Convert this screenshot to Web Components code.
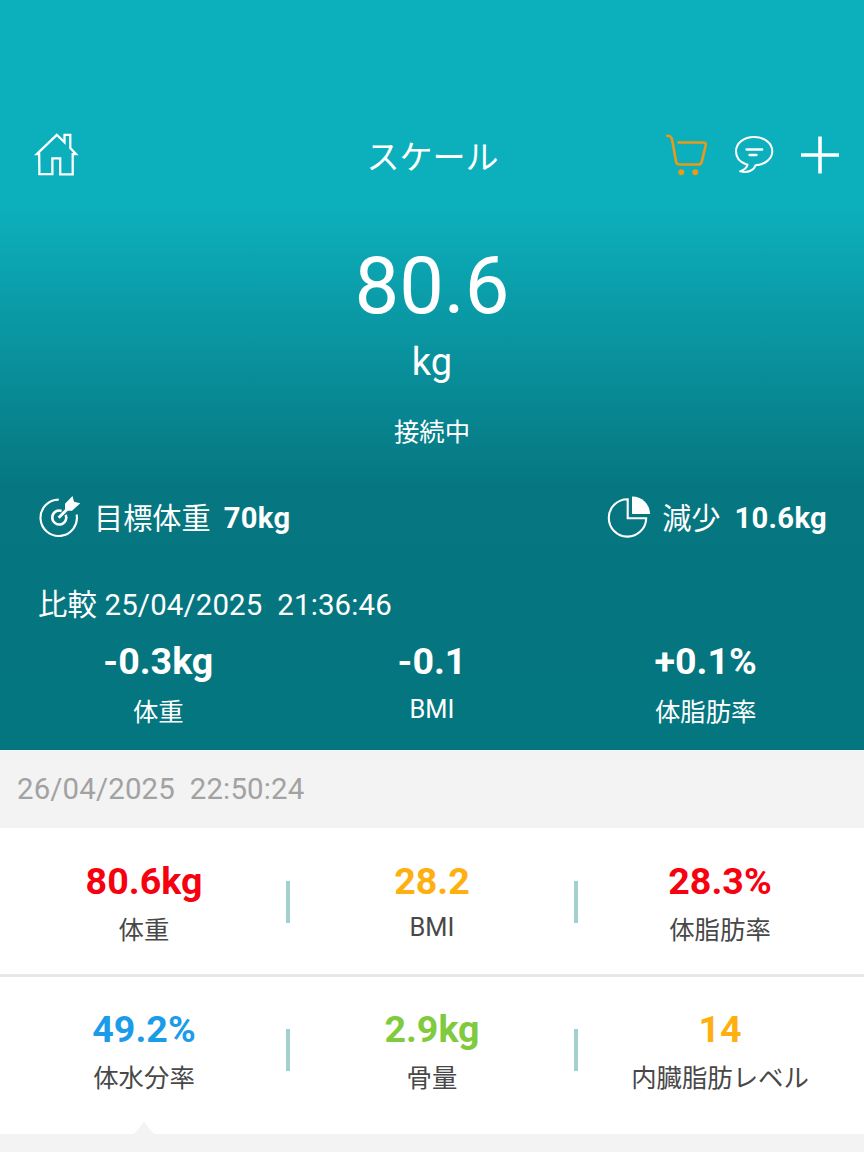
<!DOCTYPE html>
<html lang="ja">
<head>
<meta charset="utf-8">
<title>スケール</title>
<style>
html,body{margin:0;height:1152px;overflow:hidden;background:#f3f3f3}
body{font-family:Roboto,"Noto Sans CJK JP",sans-serif}
</style>
</head>
<body>
<scale-app></scale-app>
<script>
const define = (name, html) => customElements.define(name, class extends HTMLElement {
  constructor() {
    super();
    const t = document.createElement('template');
    t.innerHTML = html;
    this.attachShadow({ mode: 'open' }).appendChild(t.content.cloneNode(true));
  }
});

define('scale-toolbar', `
<style>
:host{display:grid;grid-template-columns:1fr auto 1fr;align-items:center;height:74px;padding:0 25px 0 34px;color:#fff}
.title{font-size:33px;line-height:40px;padding:5px 0 0;margin-left:9px;margin-right:17px}
.actions{display:flex;justify-content:flex-end;align-items:center}
svg{display:block;fill:none;stroke:#fff;stroke-linecap:round;stroke-linejoin:round;overflow:visible}
.cart{margin-right:26px}.chat{margin-right:27px}
</style>
<svg width="44" height="44" viewBox="0 -.5 44 44" stroke-width="2.3" style="stroke-linejoin:miter"><path d="M5.2 20.7H2.8L22.8 1.3 30.5 8.8V1.3H36.3V14.5L42 20.7H38.7V40.9H26.2V24.9H18.4V40.7H5.4Z"/></svg>
<div class="title">スケール</div>
<div class="actions">
<svg class="cart" width="42" height="42" viewBox="0 0 42 42" style="stroke:#e99a17" stroke-width="2.6"><path d="M1.2 1.8C4.5 1.8 5.6 3 6.2 6L10 27.5C10.4 29.7 11.2 30.5 13.2 30.5H32.2C34.2 30.5 35.3 29.8 35.8 27.6L39.6 11.7C40.2 9.2 39.2 8.5 37 8.5H12.5"/><circle cx="15.3" cy="38.3" r="3" fill="#e99a17" stroke="none"/><circle cx="29.3" cy="38.3" r="3" fill="#e99a17" stroke="none"/></svg>
<svg class="chat" width="40" height="40" viewBox="0 0 40 40" stroke-width="2"><path d="M20 2C9.7 2 2 8.2 2 16.3 2 22.2 5.8 27 12 29.3L13.5 29.5C13 32.3 10.5 35 6.2 36.2 14 38.6 20.5 34.5 21.5 30.3 31 29.5 38.3 24 38.3 16.3 38.3 8.2 30.3 2 20 2Z"/><path d="M12.5 14.5H28.2M15.5 20H22.5" stroke-width="2.3"/></svg>
<svg width="38" height="38" viewBox="0 0 38 38" stroke-width="3.6" style="stroke-linecap:butt"><path d="M0 19H38M19 .5V37.5"/></svg>
</div>`);

define('weight-reading', `
<style>
:host{display:flex;flex-direction:column;align-items:center;color:#fff;height:256px}
.value{font-size:79.5px;line-height:100px;padding-top:44px}
.unit{font-size:38px;line-height:44px;margin-top:4px;letter-spacing:.2px}
.state{font-size:25.4px;line-height:32px;margin-top:32px}
</style>
<div class="value"><slot name="value"></slot></div>
<div class="unit"><slot name="unit"></slot></div>
<div class="state"><slot name="state"></slot></div>`);

define('goal-item', `
<style>
:host{display:flex;align-items:center;color:#fff;font-size:29.2px;line-height:40px}
.label{margin:0 13px 0 14px;padding-top:2px;white-space:nowrap}
b{font-weight:700;letter-spacing:.3px}
::slotted(svg){margin-bottom:2px}
:host([end]) .label{margin:0 14px 0 12px}
</style>
<slot name="icon"></slot><span class="label"><slot name="label"></slot></span><b><slot></slot></b>`);

define('metric-cell', `
<style>
:host{display:flex;flex-direction:column;align-items:center;flex:1;min-width:0}
.value{font-size:37.6px;line-height:44px;font-weight:700}
.label{font-size:25.4px;line-height:32px;margin-top:11px;padding-top:var(--label-gap,0);white-space:nowrap;color:var(--label,#484848)}
:host([latin]) .label{margin-top:8px}
</style>
<div class="value"><slot></slot></div><div class="label"><slot name="label"></slot></div>`);

define('metric-row', `
<style>
:host{display:flex;box-sizing:border-box;position:relative;height:146px;padding-top:31px;background:#fff}
i{position:absolute;top:var(--rule-top,52.5px);width:4px;height:42px;background:#9fd1d1}
i:first-of-type{left:286px}i:last-of-type{left:574px}
</style>
<slot></slot><i></i><i></i>`);

define('scale-app', `
<style>
:host{display:block;width:864px;height:1152px}
.hero{height:750px;box-sizing:border-box;padding-top:118px;background:linear-gradient(#0cafbc 0,#0cafbc 210px,#067680 490px,#047680 100%)}
.goals{display:flex;justify-content:space-between;align-items:center;height:44px;padding:0 37px 0 38px;margin-top:48px}
.compare{color:#fff;font-size:29.4px;line-height:40px;padding-left:38px;margin-top:45px;white-space:pre;letter-spacing:.15px}
.delta{display:flex;padding:0 21.5px;margin-top:14px;color:#fff;--label:#fff;--label-gap:2px}
.date{height:78px;line-height:78px;background:#f3f3f3;color:#a2a2a2;font-size:29.4px;padding-left:17px;white-space:pre;letter-spacing:.15px}
.last{height:160px;padding-top:30px;border-top:3px solid #e7e7e7;--rule-top:52px}
.tip{position:absolute;left:134px;bottom:0;width:20px;height:12px;background:#f3f3f3;clip-path:polygon(50% 0,100% 100%,0 100%)}
svg{display:block;fill:none;stroke:#fff;stroke-width:2.1;overflow:visible}
.red{color:#f7000f}.amber{color:#fdb010}.blue{color:#1b9ce9}.green{color:#7fca3d}
</style>
<div class="hero">
<scale-toolbar></scale-toolbar>
<weight-reading><span slot="value">80.6</span><span slot="unit">kg</span><span slot="state">接続中</span></weight-reading>
<div class="goals">
<goal-item><svg slot="icon" width="42" height="42" viewBox="0 0 42 42"><path d="M20.7 3.6A18.2 18.2 0 1 0 38.6 18.5"/><path d="M23.6 14.9A7 7 0 1 0 27.7 18.7" stroke-width="2.6"/><path d="M20.6 21.8 31.5 11" stroke-width="3"/><path d="M27 13.3V7.8L34.5 0 36 5.8 42.3 7.2 34 14.8H28.5Z" fill="#fff" stroke="none"/></svg><span slot="label">目標体重</span>70kg</goal-item>
<goal-item end><svg slot="icon" width="42" height="42" viewBox="-1 0 42 42"><path d="M18.7 3.2A18.7 18.7 0 1 0 37.2 22.2H18.7Z"/><path d="M23 .5A17.5 17.5 0 0 1 41 18H23Z" fill="#fff" stroke="none"/></svg><span slot="label">減少</span>10.6kg</goal-item>
</div>
<div class="compare">比較 25/04/2025  21:36:46</div>
<div class="delta">
<metric-cell>-0.3kg<span slot="label">体重</span></metric-cell>
<metric-cell latin>-0.1<span slot="label">BMI</span></metric-cell>
<metric-cell>+0.1%<span slot="label">体脂肪率</span></metric-cell>
</div>
</div>
<div class="date">26/04/2025  22:50:24</div>
<metric-row>
<metric-cell><span class="red">80.6kg</span><span slot="label">体重</span></metric-cell>
<metric-cell latin><span class="amber">28.2</span><span slot="label">BMI</span></metric-cell>
<metric-cell><span class="red">28.3%</span><span slot="label">体脂肪率</span></metric-cell>
</metric-row>
<metric-row class="last">
<metric-cell><span class="blue">49.2%</span><span slot="label">体水分率</span></metric-cell>
<metric-cell><span class="green">2.9kg</span><span slot="label">骨量</span></metric-cell>
<metric-cell><span class="amber">14</span><span slot="label">内臓脂肪レベル</span></metric-cell>
<span class="tip"></span>
</metric-row>`);
</script>
</body>
</html>
